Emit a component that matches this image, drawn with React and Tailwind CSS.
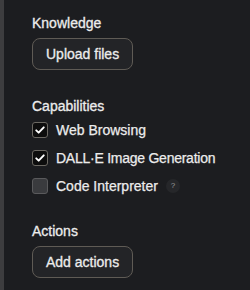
import React from "react";

function Check({ checked }) {
  return checked ? (
    <span className="flex h-4 w-4 items-center justify-center rounded-[3px] border border-[#6b6862] bg-[#0d0d0d]">
      <svg viewBox="0 0 16 16" className="h-3 w-3" fill="none">
        <path d="M3 8.5l3.2 3L13 4.5" stroke="#ffffff" strokeWidth="2.6" strokeLinecap="round" strokeLinejoin="round" />
      </svg>
    </span>
  ) : (
    <span className="h-4 w-4 rounded-[3px] border border-[#5a5a5c] bg-[#3a3b3e]" />
  );
}

function Row({ checked, label, help, tight }) {
  return (
    <div className="flex h-5 items-center">
      <Check checked={checked} />
      <span
        className={
          tight
            ? "ml-2 text-[14px] leading-5 tracking-[-0.25px] text-[#ececec] [-webkit-text-stroke:0.25px_#ececec]"
            : "ml-2 text-[14px] leading-5 text-[#ececec] [-webkit-text-stroke:0.25px_#ececec]"
        }
      >
        {label}
      </span>
      {help && (
        <span className="ml-2 flex h-[14px] w-[14px] items-center justify-center rounded-full bg-[#26272a] text-[8px] leading-none text-[#9a9a9a]">
          ?
        </span>
      )}
    </div>
  );
}

function Btn({ children }) {
  return (
    <button className="flex h-8 items-center rounded-lg border border-[#5f5b55] bg-[#232427] px-[13px] text-[14px] leading-5 text-[#ececec] [-webkit-text-stroke:0.3px_#ececec]">
      {children}
    </button>
  );
}

export default function App() {
  return (
    <div
      className="flex h-[290px] w-[250px] bg-[#1c1d20]"
      style={{ fontFamily: '"Liberation Sans", Arial, sans-serif' }}
    >
      <div className="w-1 shrink-0 bg-[#3d3d3f]" />
      <div className="flex flex-col pl-[28px] pt-[13px]">
        <div className="h-5 text-[14px] leading-5 text-[#ececec] [-webkit-text-stroke:0.3px_#ececec]">Knowledge</div>
        <div className="mt-[5px] flex">
          <Btn>Upload files</Btn>
        </div>
        <div className="mt-[26px] h-5 text-[14px] leading-5 text-[#ececec] [-webkit-text-stroke:0.3px_#ececec]">Capabilities</div>
        <div className="mt-1 flex flex-col gap-2">
          <Row checked label="Web Browsing" />
          <Row checked label="DALL·E Image Generation" tight />
          <Row label="Code Interpreter" help />
        </div>
        <div className="mt-[25px] h-5 text-[14px] leading-5 text-[#ececec] [-webkit-text-stroke:0.3px_#ececec]">Actions</div>
        <div className="mt-[5px] flex">
          <Btn>Add actions</Btn>
        </div>
      </div>
    </div>
  );
}
